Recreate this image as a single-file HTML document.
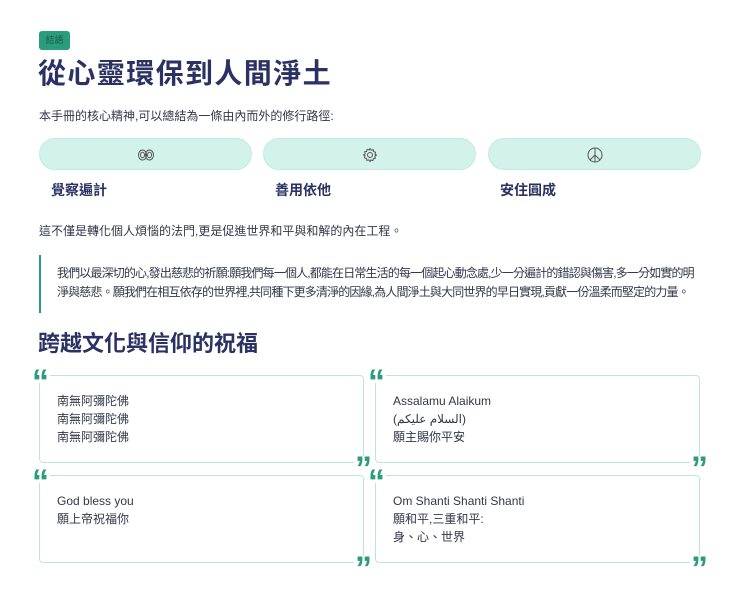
<!DOCTYPE html>
<html><head><meta charset="utf-8"><style>
*{margin:0;padding:0;box-sizing:border-box}
body{width:740px;height:594px;background:#fff;font-family:"Liberation Sans","Noto Sans CJK TC",sans-serif;color:#33364a;position:relative;overflow:hidden}
.a{position:absolute}
.badge{left:39px;top:31px;width:31px;height:19px;background:#2a9d7c;border-radius:3px;font-size:9px;color:#1d5a47;text-align:center;line-height:19px}
h1{position:absolute;left:38px;top:54px;font-size:28px;font-weight:bold;color:#2b3163;line-height:40px;letter-spacing:1.4px}
.t{font-size:12px;line-height:18px}
.pill{position:absolute;top:138px;width:213px;height:32px;background:#d3f3ea;border-radius:16px;border:1px solid #c4ebdf}
.pill svg{position:absolute;left:50%;top:8px;margin-left:-8px}
.lab{position:absolute;top:180px;font-size:14px;font-weight:bold;color:#2b3163}
.quote{left:39px;top:255px;width:680px;height:58px;border-left:2px solid #2a9d7c;padding:9px 0 0 16px;font-size:12px;line-height:19px;white-space:nowrap;letter-spacing:-0.85px}
h2{position:absolute;left:38px;top:328px;font-size:22px;font-weight:bold;color:#2b3163;line-height:32px}
.card{position:absolute;width:325px;height:88px;border:1.5px solid #bfe5d9;border-radius:4px;padding:16px 0 0 17px;font-size:12px;line-height:18px}
.q{position:absolute;color:#2a9d7c;font-size:34px;font-weight:bold;font-family:"Liberation Sans",sans-serif;line-height:26px;height:14px;overflow:visible;background:#fff;padding:0 1px}
</style></head><body>
<div class="a badge">結語</div>
<h1>從心靈環保到人間淨土</h1>
<div class="a t" style="left:39px;top:107px">本手冊的核心精神,可以總結為一條由內而外的修行路徑:</div>
<div class="pill" style="left:39px"><svg width="16" height="16" viewBox="0 0 16 16" fill="none" stroke="#555" stroke-width="1"><ellipse cx="4.5" cy="8" rx="4" ry="5"/><ellipse cx="11.5" cy="8" rx="4" ry="5"/><ellipse cx="4.5" cy="8" rx="2" ry="2.8"/><ellipse cx="11.5" cy="8" rx="2" ry="2.8"/></svg></div>
<div class="pill" style="left:263px"><svg width="16" height="16" viewBox="0 0 16 16" fill="none" stroke="#555" stroke-width="1"><circle cx="8" cy="8" r="2.5"/><path d="M8 1.5l1.2 1.7 2-.6.4 2 2 .6-.6 2L14.5 8l-1.7 1.2.6 2-2 .4-.6 2-2-.6L8 14.5l-1.2-1.7-2 .6-.4-2-2-.6.6-2L1.5 8l1.7-1.2-.6-2 2-.4.6-2 2 .6z"/></svg></div>
<div class="pill" style="left:488px"><svg width="16" height="16" viewBox="0 0 16 16" fill="none" stroke="#555" stroke-width="1"><circle cx="8" cy="8" r="7"/><path d="M8 1v14M8 8l-5 5M8 8l5 5"/></svg></div>
<div class="lab" style="left:51px">覺察遍計</div>
<div class="lab" style="left:275px">善用依他</div>
<div class="lab" style="left:500px">安住圓成</div>
<div class="a t" style="left:39px;top:222px">這不僅是轉化個人煩惱的法門,更是促進世界和平與和解的內在工程。</div>
<div class="a quote">我們以最深切的心,發出慈悲的祈願:願我們每一個人,都能在日常生活的每一個起心動念處,少一分遍計的錯認與傷害,多一分如實的明<br>淨與慈悲。願我們在相互依存的世界裡,共同種下更多清淨的因緣,為人間淨土與大同世界的早日實現,貢獻一份溫柔而堅定的力量。</div>
<h2>跨越文化與信仰的祝福</h2>
<div class="card" style="left:39px;top:375px">南無阿彌陀佛<br>南無阿彌陀佛<br>南無阿彌陀佛</div>
<div class="card" style="left:375px;top:375px">Assalamu Alaikum<br>(السلام عليكم)<br>願主賜你平安</div>
<div class="card" style="left:39px;top:475px">God bless you<br>願上帝祝福你</div>
<div class="card" style="left:375px;top:475px">Om Shanti Shanti Shanti<br>願和平,三重和平:<br>身、心、世界</div>
<div class="q" style="left:31px;top:369px">“</div>
<div class="q" style="left:354px;top:456px">”</div>
<div class="q" style="left:367px;top:369px">“</div>
<div class="q" style="left:690px;top:456px">”</div>
<div class="q" style="left:31px;top:469px">“</div>
<div class="q" style="left:354px;top:556px">”</div>
<div class="q" style="left:367px;top:469px">“</div>
<div class="q" style="left:690px;top:556px">”</div>
</body></html>
